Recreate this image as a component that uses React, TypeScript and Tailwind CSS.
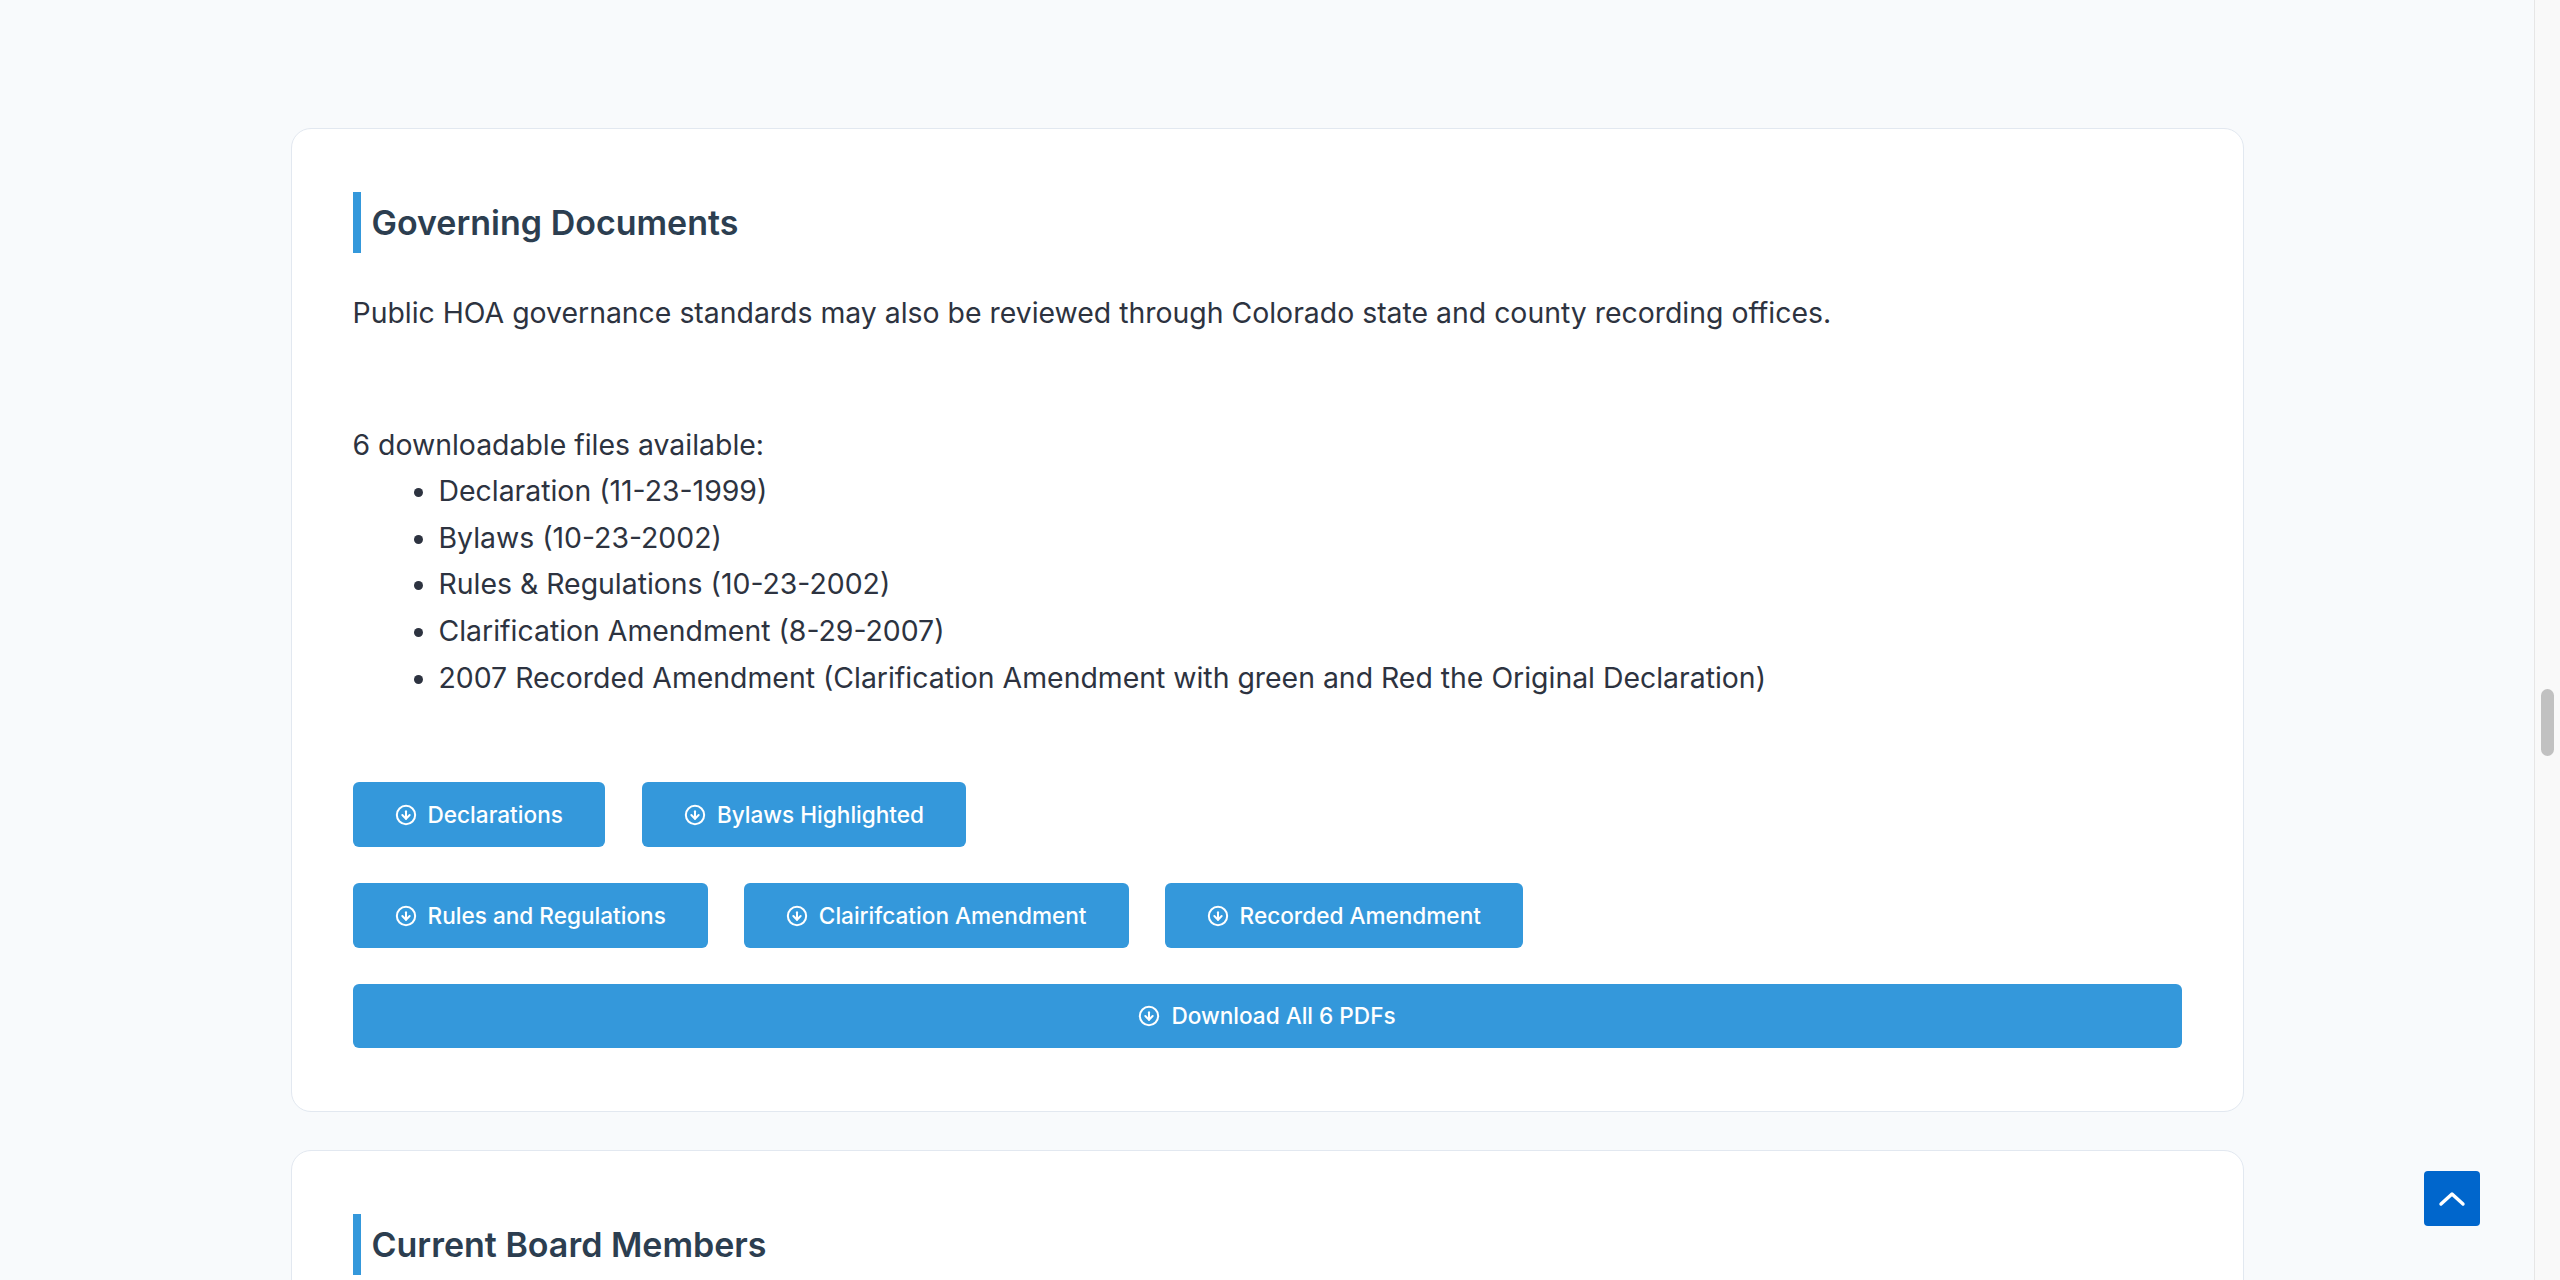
import { CircleArrowDown } from 'lucide-react';

const files = [
  "Declaration (11-23-1999)",
  "Bylaws (10-23-2002)",
  "Rules & Regulations (10-23-2002)",
  "Clarification Amendment (8-29-2007)",
  "2007 Recorded Amendment (Clarification Amendment with green and Red the Original Declaration)",
];

const DownloadButton = ({ label, wide = false }: { label: string; wide?: boolean }) => (
  <button
    className={`flex items-center justify-center gap-[11px] rounded-[6px] bg-[#3498db] text-[22.6px] font-medium text-white ${
      wide ? 'h-[64px] w-full' : 'h-[65px] px-[42px]'
    }`}
  >
    <CircleArrowDown size={22} strokeWidth={2.2} />
    <span>{label}</span>
  </button>
);

const SectionTitle = ({ children }: { children: string }) => (
  <h2 className="flex h-[61px] items-center border-l-[8px] border-[#3498db] pl-[11px] text-[34px] font-semibold text-[#2c3e50]">
    {children}
  </h2>
);

const App = () => {
  return (
    <div
      className="relative flex h-[1280px] w-full overflow-hidden bg-[#f8fafc]"
      style={{ fontFamily: 'Inter, "Noto Sans", sans-serif' }}
    >
      <main className="flex flex-1 flex-col items-center gap-[38px] pt-[128px]">
        <section className="w-[1953px] rounded-[20px] border border-[#e2e8f0] bg-white px-[61px] pt-[63px] pb-[63px]">
          <SectionTitle>Governing Documents</SectionTitle>

          <p className="mt-[37px] text-[28.4px] leading-[46.6px] text-[#2d3340]">
            Public HOA governance standards may also be reviewed through Colorado state and county recording offices.
          </p>

          <div className="mt-[85px] text-[28.4px] leading-[46.6px] text-[#2d3340]">
            <p>6 downloadable files available:</p>
            <ul className="list-disc pl-[86px]">
              {files.map((f) => (
                <li key={f}>{f}</li>
              ))}
            </ul>
          </div>

          <div className="mt-[81px] flex flex-col gap-[36px]">
            <div className="flex gap-[37px]">
              <DownloadButton label="Declarations" />
              <DownloadButton label="Bylaws Highlighted" />
            </div>
            <div className="flex gap-[36px]">
              <DownloadButton label="Rules and Regulations" />
              <DownloadButton label="Clairifcation Amendment" />
              <DownloadButton label="Recorded Amendment" />
            </div>
            <DownloadButton label="Download All 6 PDFs" wide />
          </div>
        </section>

        <section className="w-[1953px] shrink-0 rounded-[20px] border border-[#e2e8f0] bg-white px-[61px] pt-[63px] pb-[63px]">
          <SectionTitle>Current Board Members</SectionTitle>
          <div className="h-[300px]" />
        </section>
      </main>

      {/* fake scrollbar */}
      <div className="w-[26px] shrink-0 border-l border-[#e6e6e6] bg-[#f9f9f9] pt-[689px] pl-[6px]">
        <div className="h-[67px] w-[13px] rounded-full bg-[#c1c1c1]" />
      </div>

      <button className="absolute right-[80px] bottom-[54px] flex h-[55px] w-[56px] items-center justify-center rounded-[4px] bg-[#0066cc]">
        <svg width="28" height="16" viewBox="0 0 28 16" fill="none">
          <polyline
            points="3,13 14,3 25,13"
            stroke="white"
            strokeWidth="3.4"
            strokeLinecap="round"
            strokeLinejoin="round"
          />
        </svg>
      </button>
    </div>
  );
};

export default App;
